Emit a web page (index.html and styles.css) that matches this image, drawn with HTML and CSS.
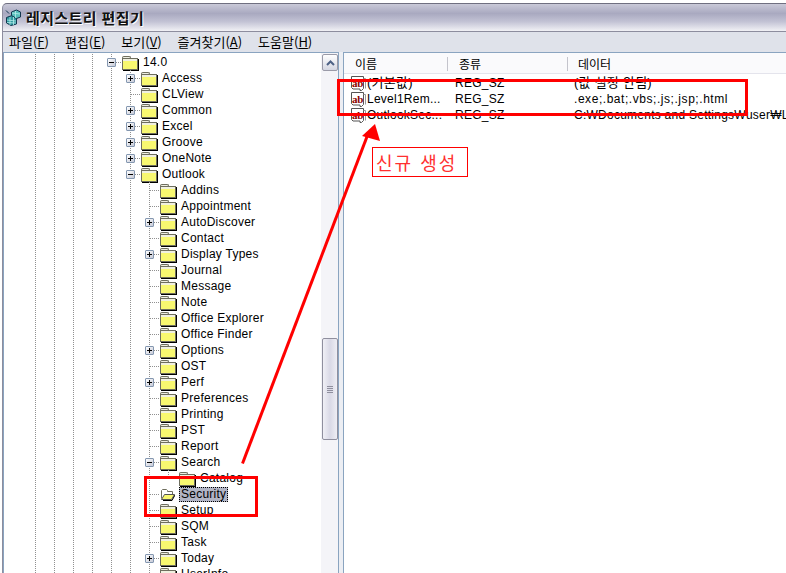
FILE: index.html
```html
<!DOCTYPE html>
<html lang="ko">
<head>
<meta charset="utf-8">
<title>레지스트리 편집기</title>
<link rel="stylesheet" href="styles.css">
</head>
<body>
<svg class="defs" width="0" height="0" aria-hidden="true">
  <defs>
    <symbol id="str" viewBox="0 0 16 16">
      <path d="M1.5 1.5H13.5V13.5L11.5 15.5H10V14H3L1.5 12.5Z" fill="#fff" stroke="#555"/>
      <path d="M13.5 3.5H15.5V13.5" fill="none" stroke="#999"/>
      <text x="7.5" y="11.5" class="ab">ab</text>
    </symbol>
  </defs>
</svg>

<div class="window">
  <header class="titlebar">
    <svg class="app-icon" width="17" height="17" viewBox="0 0 17 17" aria-hidden="true">
      <path d="M1.5 8.5L7 6.5L11.5 9V15L6 16.5L1.5 14Z" fill="#2f9aa0" stroke="#12364f"/>
      <path d="M6.5 6.5V3L11.5 1L15.5 3V8L11.5 9.5Z" fill="#58c0bc" stroke="#12364f"/>
      <path d="M2 11L11 12M2 13.5L11 14M5 8V16M8.500 8V16M7 4L15 5M10.500 2V9" stroke="#b8ecea" stroke-width=".8"/>
      <path d="M1 1.500L4 4.500" stroke="#12364f"/>
    </svg>
    <span class="title-text">레지스트리 편집기</span>
  </header>

  <nav class="menubar">
    <span class="menu-item">파일(<u>F</u>)</span>
    <span class="menu-item">편집(<u>E</u>)</span>
    <span class="menu-item">보기(<u>V</u>)</span>
    <span class="menu-item">즐겨찾기(<u>A</u>)</span>
    <span class="menu-item">도움말(<u>H</u>)</span>
  </nav>

  <main class="panes">
    <section class="tree-pane">
      <div class="tree">
        <div class="row"><i class="g"></i><i class="g"></i><i class="g"></i><i class="g"></i><i class="c"><b class="minus"></b></i><i class="fo"></i><span class="label">14.0</span></div>
        <div class="row"><i class="g"></i><i class="g"></i><i class="g"></i><i class="g"></i><i class="g"></i><i class="c"><b class="plus"></b></i><i class="fo"></i><span class="label">Access</span></div>
        <div class="row"><i class="g"></i><i class="g"></i><i class="g"></i><i class="g"></i><i class="g"></i><i class="c"></i><i class="fo"></i><span class="label">CLView</span></div>
        <div class="row"><i class="g"></i><i class="g"></i><i class="g"></i><i class="g"></i><i class="g"></i><i class="c"><b class="plus"></b></i><i class="fo"></i><span class="label">Common</span></div>
        <div class="row"><i class="g"></i><i class="g"></i><i class="g"></i><i class="g"></i><i class="g"></i><i class="c"><b class="plus"></b></i><i class="fo"></i><span class="label">Excel</span></div>
        <div class="row"><i class="g"></i><i class="g"></i><i class="g"></i><i class="g"></i><i class="g"></i><i class="c"><b class="plus"></b></i><i class="fo"></i><span class="label">Groove</span></div>
        <div class="row"><i class="g"></i><i class="g"></i><i class="g"></i><i class="g"></i><i class="g"></i><i class="c"><b class="plus"></b></i><i class="fo"></i><span class="label">OneNote</span></div>
        <div class="row"><i class="g"></i><i class="g"></i><i class="g"></i><i class="g"></i><i class="g"></i><i class="c"><b class="minus"></b></i><i class="fo"></i><span class="label">Outlook</span></div>
        <div class="row"><i class="g"></i><i class="g"></i><i class="g"></i><i class="g"></i><i class="g"></i><i class="g"></i><i class="c"></i><i class="fo"></i><span class="label">Addins</span></div>
        <div class="row"><i class="g"></i><i class="g"></i><i class="g"></i><i class="g"></i><i class="g"></i><i class="g"></i><i class="c"></i><i class="fo"></i><span class="label">Appointment</span></div>
        <div class="row"><i class="g"></i><i class="g"></i><i class="g"></i><i class="g"></i><i class="g"></i><i class="g"></i><i class="c"><b class="plus"></b></i><i class="fo"></i><span class="label">AutoDiscover</span></div>
        <div class="row"><i class="g"></i><i class="g"></i><i class="g"></i><i class="g"></i><i class="g"></i><i class="g"></i><i class="c"></i><i class="fo"></i><span class="label">Contact</span></div>
        <div class="row"><i class="g"></i><i class="g"></i><i class="g"></i><i class="g"></i><i class="g"></i><i class="g"></i><i class="c"><b class="plus"></b></i><i class="fo"></i><span class="label">Display Types</span></div>
        <div class="row"><i class="g"></i><i class="g"></i><i class="g"></i><i class="g"></i><i class="g"></i><i class="g"></i><i class="c"></i><i class="fo"></i><span class="label">Journal</span></div>
        <div class="row"><i class="g"></i><i class="g"></i><i class="g"></i><i class="g"></i><i class="g"></i><i class="g"></i><i class="c"></i><i class="fo"></i><span class="label">Message</span></div>
        <div class="row"><i class="g"></i><i class="g"></i><i class="g"></i><i class="g"></i><i class="g"></i><i class="g"></i><i class="c"></i><i class="fo"></i><span class="label">Note</span></div>
        <div class="row"><i class="g"></i><i class="g"></i><i class="g"></i><i class="g"></i><i class="g"></i><i class="g"></i><i class="c"></i><i class="fo"></i><span class="label">Office Explorer</span></div>
        <div class="row"><i class="g"></i><i class="g"></i><i class="g"></i><i class="g"></i><i class="g"></i><i class="g"></i><i class="c"></i><i class="fo"></i><span class="label">Office Finder</span></div>
        <div class="row"><i class="g"></i><i class="g"></i><i class="g"></i><i class="g"></i><i class="g"></i><i class="g"></i><i class="c"><b class="plus"></b></i><i class="fo"></i><span class="label">Options</span></div>
        <div class="row"><i class="g"></i><i class="g"></i><i class="g"></i><i class="g"></i><i class="g"></i><i class="g"></i><i class="c"></i><i class="fo"></i><span class="label">OST</span></div>
        <div class="row"><i class="g"></i><i class="g"></i><i class="g"></i><i class="g"></i><i class="g"></i><i class="g"></i><i class="c"><b class="plus"></b></i><i class="fo"></i><span class="label">Perf</span></div>
        <div class="row"><i class="g"></i><i class="g"></i><i class="g"></i><i class="g"></i><i class="g"></i><i class="g"></i><i class="c"></i><i class="fo"></i><span class="label">Preferences</span></div>
        <div class="row"><i class="g"></i><i class="g"></i><i class="g"></i><i class="g"></i><i class="g"></i><i class="g"></i><i class="c"></i><i class="fo"></i><span class="label">Printing</span></div>
        <div class="row"><i class="g"></i><i class="g"></i><i class="g"></i><i class="g"></i><i class="g"></i><i class="g"></i><i class="c"></i><i class="fo"></i><span class="label">PST</span></div>
        <div class="row"><i class="g"></i><i class="g"></i><i class="g"></i><i class="g"></i><i class="g"></i><i class="g"></i><i class="c"></i><i class="fo"></i><span class="label">Report</span></div>
        <div class="row"><i class="g"></i><i class="g"></i><i class="g"></i><i class="g"></i><i class="g"></i><i class="g"></i><i class="c"><b class="minus"></b></i><i class="fo"></i><span class="label">Search</span></div>
        <div class="row"><i class="g"></i><i class="g"></i><i class="g"></i><i class="g"></i><i class="g"></i><i class="g"></i><i class="g"></i><i class="c end"></i><i class="fo"></i><span class="label">Catalog</span></div>
        <div class="row"><i class="g"></i><i class="g"></i><i class="g"></i><i class="g"></i><i class="g"></i><i class="g"></i><i class="c"></i><svg class="fo-open" width="16" height="16" viewBox="0 0 16 16" aria-hidden="true"><path d="M2.5 12.500V4.500L3.500 3.500H7.500L8.500 4.500V5.500H13.500V8" fill="#fff" stroke="#6e6e5e"/><path d="M2.500 13.500L5.500 8.500H15.500L12.500 13.500Z" fill="#f8f870" stroke="#555"/><path d="M16 9L13 14.500H4" fill="none" stroke="#000"/></svg><span class="label selected">Security</span></div>
        <div class="row"><i class="g"></i><i class="g"></i><i class="g"></i><i class="g"></i><i class="g"></i><i class="g"></i><i class="c"></i><i class="fo"></i><span class="label">Setup</span></div>
        <div class="row"><i class="g"></i><i class="g"></i><i class="g"></i><i class="g"></i><i class="g"></i><i class="g"></i><i class="c"></i><i class="fo"></i><span class="label">SQM</span></div>
        <div class="row"><i class="g"></i><i class="g"></i><i class="g"></i><i class="g"></i><i class="g"></i><i class="g"></i><i class="c"></i><i class="fo"></i><span class="label">Task</span></div>
        <div class="row"><i class="g"></i><i class="g"></i><i class="g"></i><i class="g"></i><i class="g"></i><i class="g"></i><i class="c"><b class="plus"></b></i><i class="fo"></i><span class="label">Today</span></div>
        <div class="row"><i class="g"></i><i class="g"></i><i class="g"></i><i class="g"></i><i class="g"></i><i class="g"></i><i class="c"></i><i class="fo"></i><span class="label">UserInfo</span></div>
      </div>
      <div class="scrollbar">
        <div class="scroll-btn">
          <svg width="9" height="6" viewBox="0 0 9 6" aria-hidden="true"><path d="M1 5L4.5 1.500L8 5" fill="none" stroke="#4d6185" stroke-width="2"/></svg>
        </div>
        <div class="scroll-thumb"><span class="grip"></span></div>
      </div>
    </section>

    <div class="splitter"></div>

    <section class="list-pane">
      <div class="list-head">
        <span class="col col-name">이름</span>
        <span class="col col-type">종류</span>
        <span class="col col-data">데이터</span>
      </div>
      <div class="list-row">
        <span class="cell-name ko"><svg class="si"><use href="#str"/></svg>(기본값)</span>
        <span class="cell-type">REG_SZ</span>
        <span class="cell-data ko">(값 설정 안됨)</span>
      </div>
      <div class="list-row">
        <span class="cell-name"><svg class="si"><use href="#str"/></svg>Level1Rem...</span>
        <span class="cell-type">REG_SZ</span>
        <span class="cell-data wide">.exe;.bat;.vbs;.js;.jsp;.html</span>
      </div>
      <div class="list-row">
        <span class="cell-name"><svg class="si"><use href="#str"/></svg>OutlookSec...</span>
        <span class="cell-type">REG_SZ</span>
        <span class="cell-data">C:₩Documents and Settings₩user₩Local Settings</span>
      </div>
    </section>
  </main>
</div>

<svg class="annotations" width="786" height="573" viewBox="0 0 786 573" aria-hidden="true">
  <rect x="338.500" y="80.500" width="408" height="34" class="anno-rect"/>
  <rect x="145.500" y="477.500" width="111" height="38" class="anno-rect"/>
  <path d="M242.500 463.500L368 134" class="anno-line"/>
  <path d="M375 124L362 136L380 141Z" class="anno-head"/>
</svg>
<div class="callout">신규 생성</div>
</body>
</html>
```
FILE: styles.css
```css
* { box-sizing: border-box; }
html, body { margin: 0; padding: 0; height: 573px; overflow: hidden; background: #fff; }
body { position: relative; font: 12px/16px "Liberation Sans", "Noto Sans CJK KR", sans-serif; color: #000; }
.defs { position: absolute; }
.ab { font: bold 11px "Liberation Serif", serif; fill: #8a0000; text-anchor: middle; letter-spacing: -.3px; }

.window { height: 573px; padding: 3px 0 0 2px; display: flex; flex-direction: column; }

.titlebar {
  height: 29px; flex: none; display: flex; align-items: center; gap: 4px; padding: 0 0 0 2px;
  border-top: 1px solid #6f6f80; border-bottom: 1px solid #8d8d9e; border-left: 1px solid #8d8d9e; border-top-left-radius: 5px;
  background: linear-gradient(#c9c9d8 0, #a9a9c0 35%, #c2c2d4 65%, #f1f1f5 100%);
}
.app-icon { flex: none; }
.title-text { font: bold 15px/16px "Noto Sans CJK KR", sans-serif; letter-spacing: .4px; color: #111; text-shadow: 1px 1px 0 #fff; }

.menubar { height: 20px; flex: none; display: flex; background: #dfe2ea; padding-left: 6px; gap: 16px; border-left: 1px solid #8d8d9e; align-items: center; font: 13px/16px "Noto Sans CJK KR", sans-serif; }
.menu-item { white-space: nowrap; }

.panes { flex: 1; min-height: 0; display: flex; background: #dfe2ea; border-left: 1px solid #8d8d9e; }

.tree-pane { width: 336px; flex: none; display: flex; background: #fff; border: 1px solid #8aa4c0; border-width: 1px 1px 0 1px; }
.tree { flex: 1; min-width: 0; padding: 1px 0 0 22px; overflow: hidden; }
.row { height: 16px; display: flex; align-items: center; white-space: nowrap; }
.g, .c { flex: none; width: 19px; height: 16px; position: relative; display: flex; align-items: center; justify-content: center;
  background: repeating-linear-gradient(#909090 0 1px, transparent 1px 2px) 9px 0 / 1px 100% no-repeat; }
.c::after { content: ""; position: absolute; left: 10px; top: 8px; width: 9px; height: 1px;
  background: repeating-linear-gradient(90deg, #909090 0 1px, transparent 1px 2px); }
.c.end { background-size: 1px 9px; }
.plus, .minus { position: relative; z-index: 1; width: 9px; height: 9px; border: 1px solid #8497b0; border-radius: 1px; background: linear-gradient(135deg, #fff, #c6c9d6); }
.plus::before, .minus::before { content: ""; position: absolute; left: 1px; top: 3px; width: 5px; height: 1px; background: #000; }
.plus::after { content: ""; position: absolute; left: 3px; top: 1px; width: 1px; height: 5px; background: #000; }

.fo { flex: none; width: 16px; height: 16px; position: relative; }
.fo::before { content: ""; position: absolute; left: 1px; top: 2px; width: 7px; height: 3px; background: #eeeee2; border: 1px solid #6e6e5e; border-bottom: 0; border-radius: 2px 2px 0 0; }
.fo::after { content: ""; position: absolute; left: 1px; top: 4px; width: 14px; height: 10px; border: 1px solid #6e6e5e; box-shadow: 1px 1px 0 #000;
  background: linear-gradient(#f0f0e0 0 2px, #f8f870 2px); }
.fo-open { flex: none; }

.label { margin-left: 4px; padding: 0 2px; height: 15px; line-height: 15px; letter-spacing: .25px; }
.selected { background: #b1b4c4; outline: 1px dotted #000; outline-offset: -1px; }

.scrollbar { width: 17px; flex: none; background: #f4f4f8; padding: 1px 0 0 1px; display: flex; flex-direction: column; }
.scroll-btn { height: 17px; width: 16px; flex: none; display: flex; align-items: center; justify-content: center; border: 1px solid #9a9aa8; border-radius: 2px; background: linear-gradient(#fff, #d4d6e2); }
.scroll-thumb { height: 102px; width: 16px; flex: none; margin-top: 267px; border: 1px solid #8f8f9e; border-radius: 2px; background: linear-gradient(90deg, #f0f0f6, #d9d9e6 50%, #eeeef4); display: flex; align-items: center; justify-content: center; }
.grip { width: 6px; height: 7px; background: repeating-linear-gradient(#8f8f9e 0 1px, transparent 1px 2px); }

.splitter { width: 4px; flex: none; background: #eceef3; }

.list-pane { flex: 1; min-width: 0; overflow: hidden; background: #fff; border: 1px solid #8aa4c0; border-width: 1px 0 0 1px; white-space: nowrap; }
.list-head { height: 21px; margin-bottom: 1px; display: flex; align-items: center; padding-top: 1px; background: #fafafc; border-bottom: 1px solid #e4e4ec; font-family: "Noto Sans CJK KR", sans-serif; }
.col { height: 14px; line-height: 14px; }
.col-name { width: 103px; padding-left: 11px; }
.col-type { width: 120px; padding-left: 11px; border-left: 1px solid #c4c4cc; }
.col-data { padding-left: 10px; border-left: 1px solid #c4c4cc; }
.list-row { height: 16px; display: flex; align-items: center; letter-spacing: .25px; }
.cell-name { width: 111px; flex: none; display: flex; align-items: center; padding-left: 6px; gap: 1px; }
.si { width: 16px; height: 16px; flex: none; }
.cell-type { width: 119px; flex: none; }
.cell-data { flex: none; }
.ko { font-size: 13px; }
.wide { letter-spacing: .55px; }

.annotations { position: absolute; left: 0; top: 0; pointer-events: none; }
.anno-rect { fill: none; stroke: #ff0000; stroke-width: 3; }
.anno-line { fill: none; stroke: #ff0000; stroke-width: 3; }
.anno-head { fill: #ff0000; }
.callout { position: absolute; left: 372px; top: 147px; width: 96px; height: 30px; padding-left: 3px; border: 1px solid #ff0000; background: #fff; color: #ff3030; font: 18px/28px "Noto Sans CJK KR", sans-serif; letter-spacing: 2px; }
```
